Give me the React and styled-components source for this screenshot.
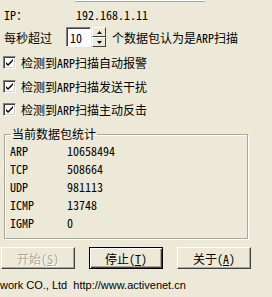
import React from 'react';
import styled, { createGlobalStyle } from 'styled-components';

const Global = createGlobalStyle`
    html, body {
        margin: 0;
        padding: 0;
        background: #ECE9D8;
    }
    body {
        width: 272px;
        height: 297px;
        overflow: hidden;
        font-family: "Noto Sans Mono CJK SC", "Noto Sans CJK SC", monospace;
        font-size: 12px;
        color: #000;
    }
`;

const Panel = styled.div`
    display: flex;
    flex-direction: column;
    width: 272px;
    height: 297px;
`;

const TopEdit = styled.div`
    margin-left: 75px;
    width: 130px;
    height: 1px;
    background: #fff;
    border-bottom: 1px solid #ACA899;
`;

const Row = styled.div`
    display: flex;
    align-items: center;
    height: ${p => p.h || 18}px;
    margin-top: ${p => p.mt || 0}px;
    padding-left: ${p => p.pl || 4}px;
    white-space: nowrap;
`;

const Label = styled.span`
    width: ${p => p.w}px;
    flex: none;
`;

const Edit = styled.div`
    width: 25px;
    height: 20px;
    margin-left: 14px;
    box-sizing: border-box;
    background: #fff;
    border: 1px solid;
    border-color: #808080 #fff #fff #808080;
    box-shadow: inset 1px 1px 0 #404040;
    display: flex;
    align-items: center;
    padding-left: 3px;
`;

const Spin = styled.div`
    display: flex;
    flex-direction: column;
    margin-left: 1px;
    margin-right: 6px;
    height: 20px;
`;

const SpinBtn = styled.div`
    width: 14px;
    height: 10px;
    box-sizing: border-box;
    background: #ECE9D8;
    border: 1px solid;
    border-color: #fff #404040 #404040 #fff;
    display: flex;
    align-items: center;
    justify-content: center;
`;

const Check = styled.div`
    width: 13px;
    height: 13px;
    box-sizing: border-box;
    background: #fff;
    border: 1px solid;
    border-color: #808080 #fff #fff #808080;
    box-shadow: inset 1px 1px 0 #404040, inset -1px -1px 0 #D4D0C8;
    margin-right: 5px;
    display: flex;
    align-items: center;
    justify-content: center;
`;

const Group = styled.fieldset`
    margin: 8px 0 0 4px;
    padding: 0 0 7px 5px;
    width: 244px;
    box-sizing: border-box;
    border: 1px solid #ACA899;
    box-shadow: 1px 1px 0 #fff, inset 1px 1px 0 #fff;
`;

const Legend = styled.legend`
    padding: 0 1px;
    margin-left: 1px;
    line-height: 14px;
`;

const StatRow = styled.div`
    display: flex;
    align-items: center;
    height: 18px;
`;

const Buttons = styled.div`
    display: flex;
    margin-top: 8px;
    padding-left: 1px;
    gap: 14px;
`;

const Button = styled.div`
    width: 74px;
    height: 22px;
    box-sizing: border-box;
    display: flex;
    align-items: center;
    justify-content: center;
    background: #ECE9D8;
    border: 1px solid;
    border-color: ${p => p.focused ? '#000' : '#fff #404040 #404040 #fff'};
    box-shadow: ${p => p.focused
        ? 'inset 1px 1px 0 #fff, inset -1px -1px 0 #404040, inset -2px -2px 0 #ACA899'
        : 'inset -1px -1px 0 #ACA899'};
    color: ${p => p.disabled ? '#ACA899' : '#000'};
    text-shadow: ${p => p.disabled ? '1px 1px 0 #fff' : 'none'};
`;

const Key = styled.span`
    text-decoration: underline;
    text-underline-offset: 1px;
`;

const Footer = styled.div`
    margin-top: auto;
    height: 20px;
    display: flex;
    align-items: center;
    font-family: "Liberation Sans", "DejaVu Sans", sans-serif;
    font-size: 11px;
    white-space: pre;
    padding-bottom: 2px;
`;

const stats = [
    ['ARP', '10658494'],
    ['TCP', '508664'],
    ['UDP', '981113'],
    ['ICMP', '13748'],
    ['IGMP', '0'],
];

const CheckMark = () => (
    <svg width="9" height="9" viewBox="0 0 9 9">
        <path d="M1 4 L3 6 L8 1 L8 3 L3 8 L1 6 Z" fill="#000" />
    </svg>
);

const Arrow = ({ up }) => (
    <svg width="5" height="3" viewBox="0 0 5 3">
        <path d={up ? 'M2.5 0 L5 3 L0 3 Z' : 'M0 0 L5 0 L2.5 3 Z'} fill="#000" />
    </svg>
);

export default function App() {
    return (
        <Panel>
            <Global />
            <TopEdit />
            <Row mt={3} h={18}>
                <Label w={72}>IP：</Label>
                <span>192.168.1.11</span>
            </Row>
            <Row mt={3} h={22}>
                <span>每秒超过</span>
                <Edit>10</Edit>
                <Spin>
                    <SpinBtn><Arrow up /></SpinBtn>
                    <SpinBtn><Arrow /></SpinBtn>
                </Spin>
                <span>个数据包认为是ARP扫描</span>
            </Row>
            <Row mt={4} h={20} pl={3}>
                <Check><CheckMark /></Check>
                <span>检测到ARP扫描自动报警</span>
            </Row>
            <Row mt={4} h={20} pl={3}>
                <Check><CheckMark /></Check>
                <span>检测到ARP扫描发送干扰</span>
            </Row>
            <Row mt={3} h={20} pl={3}>
                <Check><CheckMark /></Check>
                <span>检测到ARP扫描主动反击</span>
            </Row>
            <Group>
                <Legend>当前数据包统计</Legend>
                {stats.map(([k, v]) => (
                    <StatRow key={k}>
                        <Label w={57}>{k}</Label>
                        <span>{v}</span>
                    </StatRow>
                ))}
            </Group>
            <Buttons>
                <Button disabled>开始(<Key>S</Key>)</Button>
                <Button focused>停止(<Key>T</Key>)</Button>
                <Button>关于(<Key>A</Key>)</Button>
            </Buttons>
            <Footer>work CO., Ltd  http://www.activenet.cn</Footer>
        </Panel>
    );
}
